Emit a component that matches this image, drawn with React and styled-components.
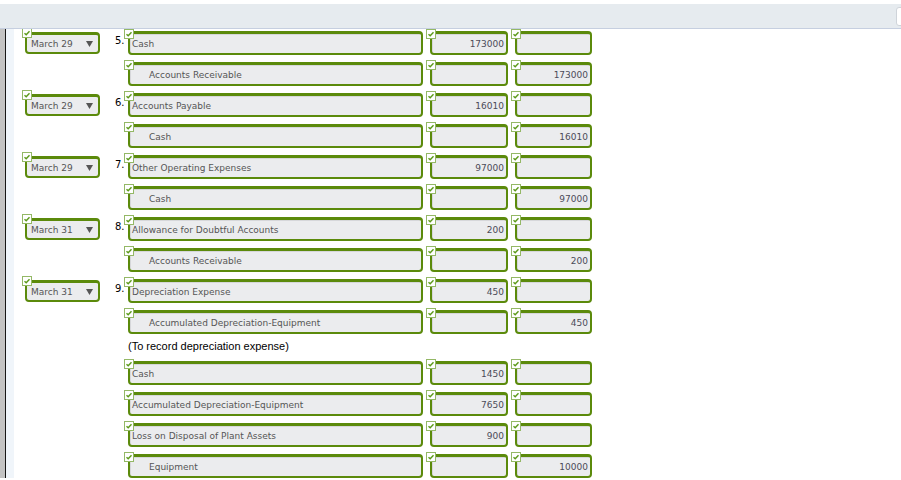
import React from "react";
import styled, { createGlobalStyle } from "styled-components";

const GlobalStyle = createGlobalStyle`
  body {
    margin: 0;
    background: #fff;
    overflow: hidden;
    font-family: "DejaVu Sans", Verdana, sans-serif;
  }
`;

const entries = [
  { date: "March 29", num: "5.", account: "Cash", debit: "173000" },
  { account: "Accounts Receivable", credit: "173000", indent: true },
  { date: "March 29", num: "6.", account: "Accounts Payable", debit: "16010" },
  { account: "Cash", credit: "16010", indent: true },
  { date: "March 29", num: "7.", account: "Other Operating Expenses", debit: "97000" },
  { account: "Cash", credit: "97000", indent: true },
  { date: "March 31", num: "8.", account: "Allowance for Doubtful Accounts", debit: "200" },
  { account: "Accounts Receivable", credit: "200", indent: true },
  { date: "March 31", num: "9.", account: "Depreciation Expense", debit: "450" },
  { account: "Accumulated Depreciation-Equipment", credit: "450", indent: true },
];

const disposal = [
  { account: "Cash", debit: "1450" },
  { account: "Accumulated Depreciation-Equipment", debit: "7650" },
  { account: "Loss on Disposal of Plant Assets", debit: "900" },
  { account: "Equipment", credit: "10000", indent: true },
];

const Check = ({ left = -6, top = -5 }) => (
  <CheckBox $left={left} $top={top}>
    <svg width="8" height="8" viewBox="0 0 8 8">
      <path d="M1.5 4.2 L3.2 5.8 L6.5 2.2" fill="none" stroke="#5c9a1a" strokeWidth="1.4" />
    </svg>
  </CheckBox>
);

const Row = ({ e }) => (
  <RowWrap>
    <DateCol>
      {e.date && (
        <Select>
          <Check left={-5} top={-7} />
          <span>{e.date}</span>
          <svg width="7" height="6" viewBox="0 0 7 6">
            <polygon points="0,0 7,0 3.5,6" fill="#555" />
          </svg>
        </Select>
      )}
    </DateCol>
    <Num>{e.num}</Num>
    <Field $w={295} $indent={e.indent}>
      <Check />
      {e.account}
    </Field>
    <Field $w={78} $right>
      <Check />
      {e.debit}
    </Field>
    <Field $w={77} $right>
      <Check />
      {e.credit}
    </Field>
  </RowWrap>
);

export default function App() {
  return (
    <>
      <GlobalStyle />
      <Header>
        <HeaderTab />
      </Header>
      <Main>
        <Gutter />
        <Journal>
          {entries.map((e, i) => (
            <Row key={i} e={e} />
          ))}
          <Note>(To record depreciation expense)</Note>
          {disposal.map((e, i) => (
            <Row key={"d" + i} e={e} />
          ))}
        </Journal>
      </Main>
    </>
  );
}

const Header = styled.div`
  position: relative;
  z-index: 2;
  margin-top: 4px;
  height: 24px;
  background: #e6ebef;
  border-bottom: 1px solid #c6cfe0;
  display: flex;
  justify-content: flex-end;
  align-items: center;
  overflow: hidden;
`;

const HeaderTab = styled.div`
  width: 10px;
  height: 17px;
  margin-right: -7px;
  background: #fff;
  border: 1px solid #cfd4da;
  border-radius: 3px;
`;

const Main = styled.div`
  display: flex;
  margin-top: -5px;
`;

const Gutter = styled.div`
  width: 14px;
  flex-shrink: 0;
  background: linear-gradient(
    to right,
    #c3c3c3 0 5px,
    #161616 5px 6px,
    #f0f5fa 6px
  );
`;

const Journal = styled.div`
  display: flex;
  flex-direction: column;
`;

const RowWrap = styled.div`
  display: flex;
  align-items: flex-start;
  height: 31px;
  padding-top: 7px;
  box-sizing: border-box;
  gap: 7px;
`;

const DateCol = styled.div`
  width: 100px;
  margin-right: -7px;
  padding-left: 11px;
  box-sizing: border-box;
`;

const Select = styled.div`
  position: relative;
  width: 75px;
  height: 22px;
  margin-top: 1px;
  box-sizing: border-box;
  border: 2px solid #5b8a0b;
  border-top-width: 3px;
  border-radius: 4px;
  background: #ebecee;
  display: flex;
  align-items: center;
  justify-content: space-between;
  padding: 0 5px 0 4px;
  font-size: 9px;
  color: #555;
`;

const Num = styled.div`
  width: 14px;
  margin-right: -7px;
  padding: 4px 0 0 1px;
  box-sizing: border-box;
  font-size: 10px;
  color: #000;
`;

const Field = styled.div`
  position: relative;
  width: ${(p) => p.$w}px;
  height: 24px;
  box-sizing: border-box;
  border: 2px solid #5b8a0b;
  border-top-width: 3px;
  border-radius: 4px;
  background: #ebecee;
  box-shadow: inset 1px 1px 0 #d6d7da;
  display: flex;
  align-items: center;
  justify-content: ${(p) => (p.$right ? "flex-end" : "flex-start")};
  padding: ${(p) => (p.$right ? "0 2px 0 0" : p.$indent ? "0 0 0 19px" : "0 0 0 2px")};
  font-size: 9px;
  color: ${(p) => (p.$right ? "#4b4b58" : "#555")};
  white-space: nowrap;
`;

const CheckBox = styled.div`
  position: absolute;
  z-index: 1;
  left: ${(p) => p.$left}px;
  top: ${(p) => p.$top}px;
  width: 10px;
  height: 10px;
  box-sizing: border-box;
  border: 1px solid #94b866;
  background: #fff;
  display: flex;
  align-items: center;
  justify-content: center;
`;

const Note = styled.div`
  height: 20px;
  padding: 5px 0 0 114px;
  box-sizing: border-box;
  font-family: "Liberation Sans", Arial, sans-serif;
  font-size: 11px;
  line-height: 14px;
  color: #000;
`;
